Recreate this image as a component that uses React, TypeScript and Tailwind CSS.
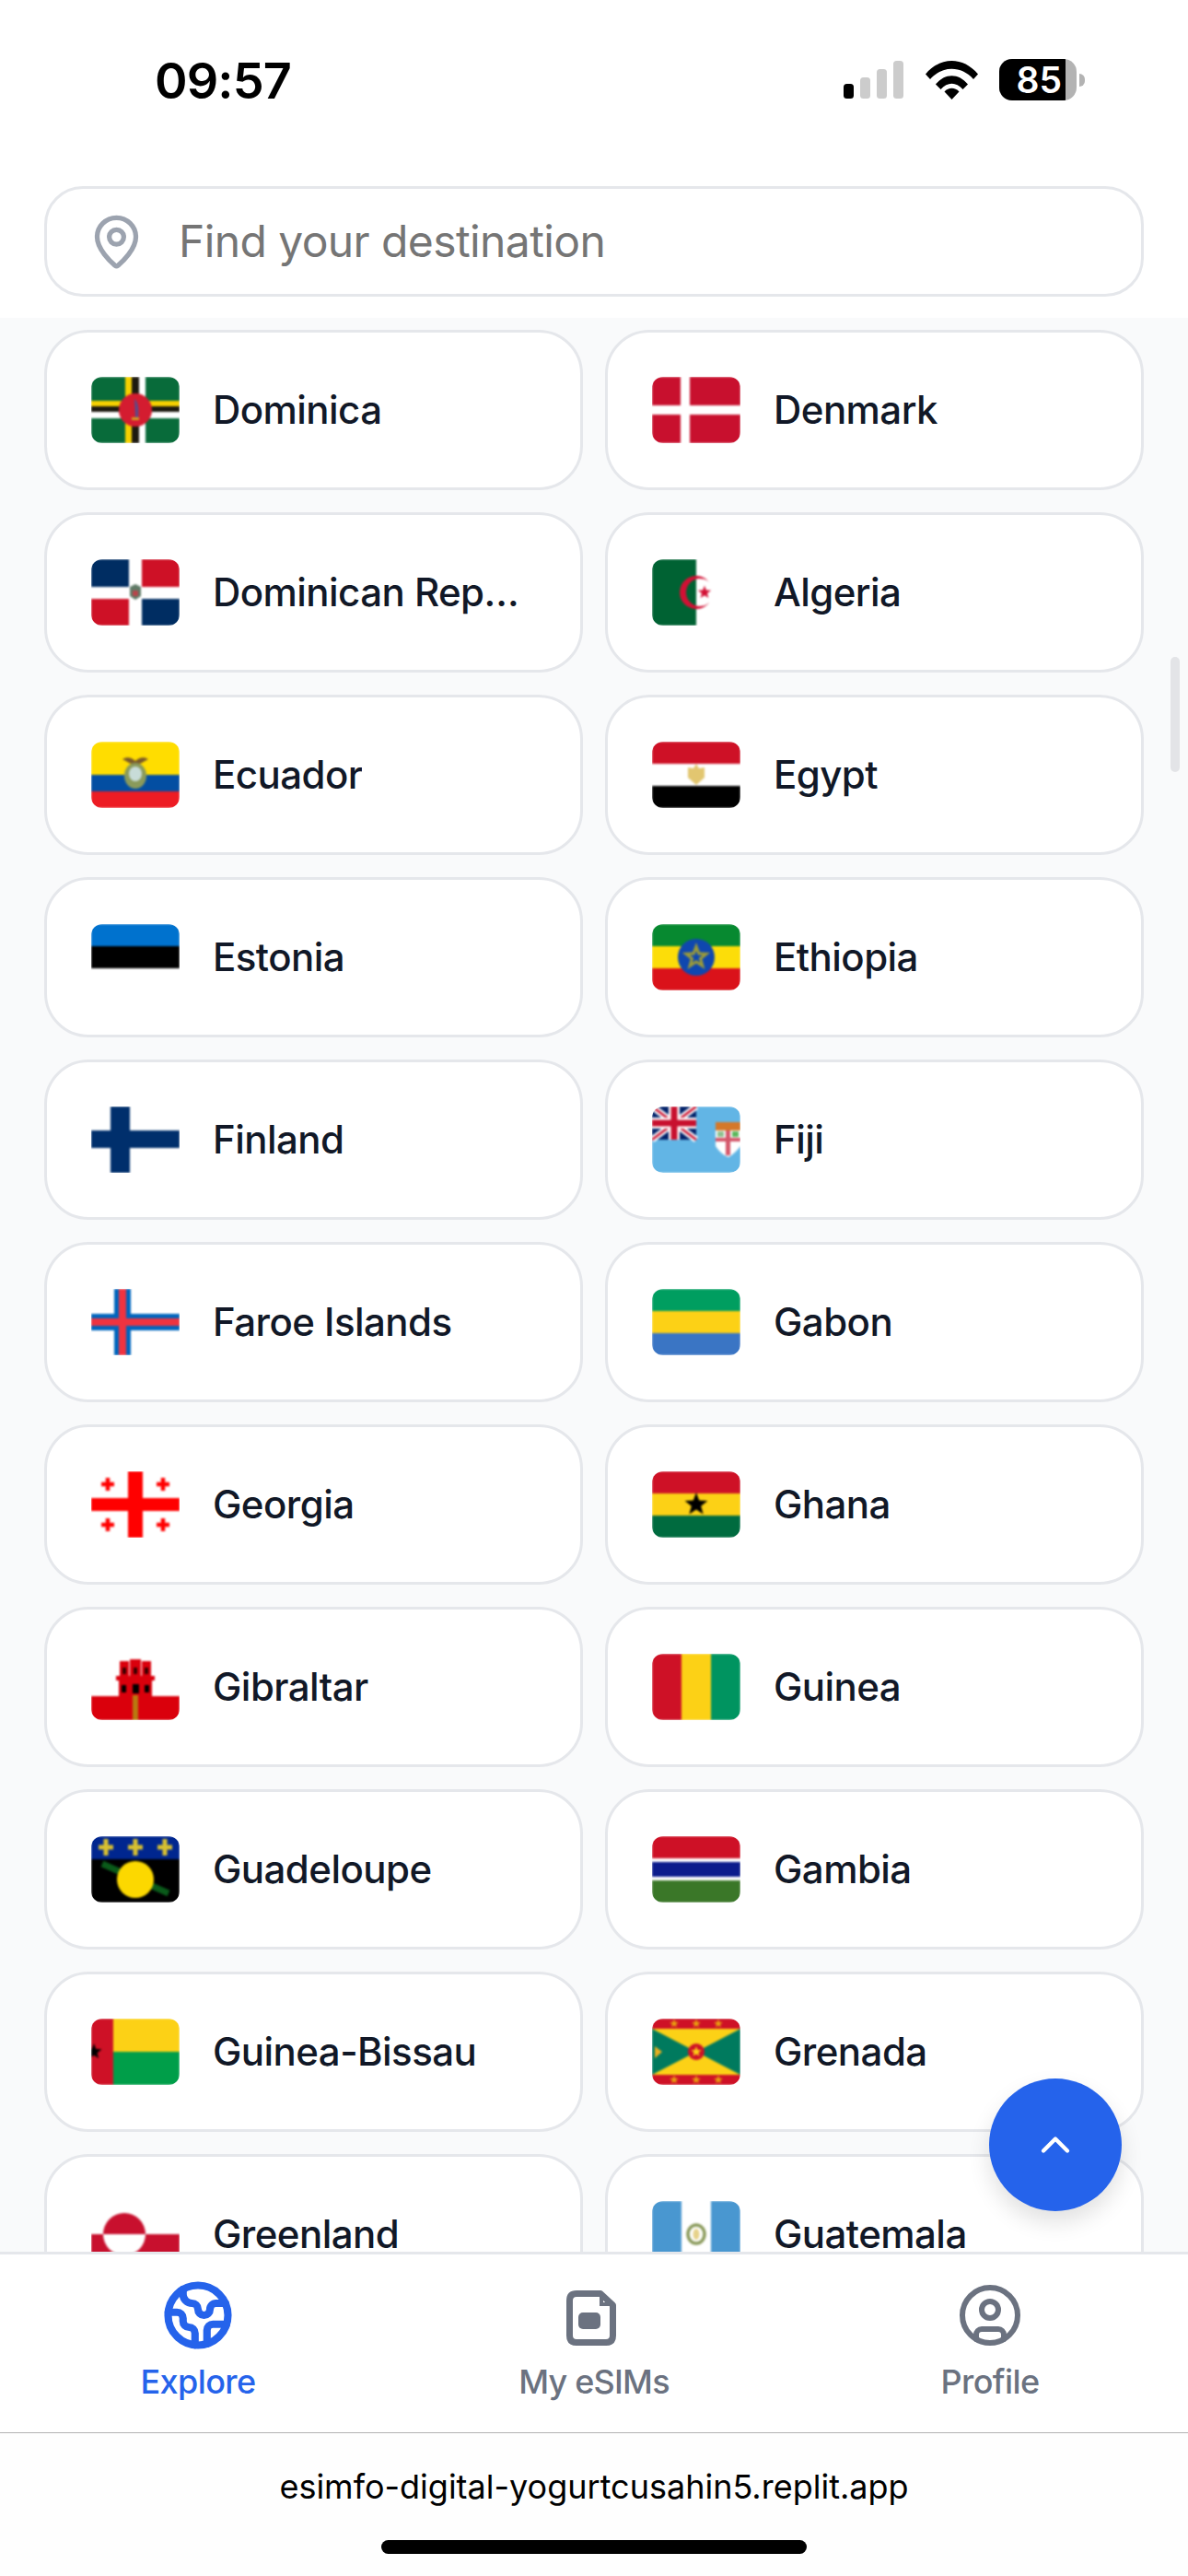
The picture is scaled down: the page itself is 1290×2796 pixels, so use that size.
import React from "react";
import { ChevronUp, Earth, MapPin, CircleUser } from "lucide-react";

const UnionJack = () => (
  <g>
    <rect width="48" height="36" fill="#012169" />
    <path d="M0 0L48 36M48 0L0 36" stroke="#fff" strokeWidth="7" />
    <path d="M0 0L48 36M48 0L0 36" stroke="#c8102e" strokeWidth="2.5" />
    <path d="M24 0V36M0 18H48" stroke="#fff" strokeWidth="12" />
    <path d="M24 0V36M0 18H48" stroke="#c8102e" strokeWidth="7" />
  </g>
);

const Star = ({ cx, cy, r, fill }: { cx: number; cy: number; r: number; fill: string }) => {
  const pts: string[] = [];
  for (let i = 0; i < 10; i++) {
    const a = -Math.PI / 2 + (i * Math.PI) / 5;
    const rad = i % 2 === 0 ? r : r * 0.42;
    pts.push(`${cx + rad * Math.cos(a)},${cy + rad * Math.sin(a)}`);
  }
  return <polygon points={pts.join(" ")} fill={fill} />;
};

const Stripes = ({ colors }: { colors: string[] }) => (
  <>
    {colors.map((c, i) => (
      <rect key={i} x="0" y={(i * 72) / colors.length} width="96" height={72 / colors.length} fill={c} />
    ))}
  </>
);

const Coat = ({ cx, cy }: { cx: number; cy: number }) => (
  <g>
    <ellipse cx={cx} cy={cy} rx="9" ry="10" fill="none" stroke="#8a9a5b" strokeWidth="3.5" />
    <ellipse cx={cx} cy={cy} rx="3.5" ry="6" fill="#e6d28a" />
  </g>
);

const flags: Record<string, React.ReactNode> = {
  Dominica: (
    <>
      <rect width="96" height="72" fill="#086b3a" />
      <rect x="37" width="7" height="72" fill="#f5d000" />
      <rect x="44" width="8" height="72" fill="#1d1a10" />
      <rect x="52" width="7" height="72" fill="#fff" />
      <rect y="26" width="96" height="6" fill="#f5d000" />
      <rect y="32" width="96" height="6" fill="#1d1a10" />
      <rect y="38" width="96" height="7" fill="#fff" />
      <circle cx="48" cy="36" r="18" fill="#d41c30" />
      <path d="M47 24c4 3 5 10 4 20h-3z" fill="#5a4a8a" />
      <rect x="44" y="44" width="8" height="3" fill="#d4a020" />
    </>
  ),
  Denmark: (
    <>
      <rect width="96" height="72" fill="#c8102e" />
      <rect x="31" width="10" height="72" fill="#fff" />
      <rect y="31" width="96" height="10" fill="#fff" />
    </>
  ),
  "Dominican Republic": (
    <>
      <rect width="96" height="72" fill="#fff" />
      <rect width="41" height="30" fill="#002d62" />
      <rect x="55" width="41" height="30" fill="#ce1126" />
      <rect y="43" width="41" height="29" fill="#ce1126" />
      <rect x="55" y="43" width="41" height="29" fill="#002d62" />
      <path d="M42 30l6-3 6 3v10l-6 4-6-4z" fill="#5f7a66" />
      <rect x="45" y="34" width="6" height="6" fill="#b8454a" />
    </>
  ),
  Algeria: (
    <>
      <rect width="96" height="72" fill="#fff" />
      <rect width="48" height="72" fill="#006233" />
      <path d="M62.4 25.2A18 18 0 1 0 62.4 46.8A15 15 0 1 1 62.4 25.2Z" fill="#d21034" />
      <Star cx={57} cy={36} r={7.5} fill="#d21034" />
    </>
  ),
  Ecuador: (
    <>
      <rect width="96" height="36" fill="#ffdd00" />
      <rect y="36" width="96" height="18" fill="#034ea2" />
      <rect y="54" width="96" height="18" fill="#ed1c24" />
      <path d="M34 19c5-3 10-2 14 2c4-4 9-5 14-2c-5 3-9 5-14 7c-5-2-9-4-14-7z" fill="#7a5a2a" />
      <ellipse cx="48" cy="37" rx="12" ry="14" fill="#8a9a5b" />
      <ellipse cx="48" cy="35" rx="7" ry="8" fill="#c8dcd8" />
    </>
  ),
  Egypt: (
    <>
      <Stripes colors={["#ce1126", "#fff", "#000"]} />
      <path d="M39 28l6 1 3-5 3 5 6-1v11l-9 8-9-8z" fill="#e2c670" />
    </>
  ),
  Estonia: <Stripes colors={["#0072ce", "#000", "#fff"]} />,
  Ethiopia: (
    <>
      <Stripes colors={["#078930", "#fcdd09", "#da121a"]} />
      <circle cx="48" cy="36" r="20" fill="#0f47af" />
      <Star cx={48} cy={36} r={16} fill="#9a9a3a" />
      <Star cx={48} cy={36} r={7} fill="#0f47af" />
    </>
  ),
  Finland: (
    <>
      <rect width="96" height="72" fill="#fff" />
      <rect x="21" width="21" height="72" fill="#002f6c" />
      <rect y="26" width="96" height="19" fill="#002f6c" />
    </>
  ),
  Fiji: (
    <>
      <rect width="96" height="72" fill="#62b5e5" />
      <UnionJack />
      <path d="M69 17h27v26q-6 8-13 12q-8-3-14-12z" fill="#fff" />
      <rect x="69" y="17" width="27" height="9" fill="#d4782a" />
      <rect x="80" y="26" width="5" height="27" fill="#d4566a" />
      <rect x="69" y="34" width="27" height="4" fill="#d4566a" />
      <rect x="71" y="27" width="7" height="6" fill="#8fc08f" />
      <rect x="87" y="27" width="7" height="6" fill="#5cb85c" />
    </>
  ),
  "Faroe Islands": (
    <>
      <rect width="96" height="72" fill="#fff" />
      <rect x="25" width="18" height="72" fill="#0065bd" />
      <rect y="27" width="96" height="18" fill="#0065bd" />
      <rect x="30" width="8" height="72" fill="#ef3340" />
      <rect y="32" width="96" height="8" fill="#ef3340" />
    </>
  ),
  Gabon: <Stripes colors={["#009e60", "#fcd116", "#3a75c4"]} />,
  Georgia: (
    <>
      <rect width="96" height="72" fill="#fff" />
      <rect x="40" width="16" height="72" fill="#f00" />
      <rect y="29" width="96" height="14" fill="#f00" />
      {[
        [18, 14],
        [78, 14],
        [18, 58],
        [78, 58],
      ].map(([x, y], i) => (
        <path key={i} d={`M${x} ${y - 7}V${y + 7}M${x - 7} ${y}H${x + 7}`} stroke="#f00" strokeWidth="4.5" />
      ))}
    </>
  ),
  Ghana: (
    <>
      <Stripes colors={["#ce1126", "#fcd116", "#006b3f"]} />
      <Star cx={48} cy={36} r={13} fill="#000" />
    </>
  ),
  Gibraltar: (
    <>
      <rect width="96" height="72" fill="#fff" />
      <rect y="46" width="96" height="26" fill="#da000c" />
      <rect x="31" y="8" width="10" height="20" fill="#da000c" />
      <rect x="42" y="6" width="12" height="22" fill="#da000c" />
      <rect x="55" y="8" width="10" height="20" fill="#da000c" />
      <rect x="27" y="24" width="42" height="5" fill="#da000c" />
      <rect x="30" y="28" width="36" height="20" fill="#da000c" />
      <rect x="34" y="15" width="4" height="7" fill="#300" />
      <rect x="46" y="15" width="4" height="7" fill="#300" />
      <rect x="58" y="15" width="4" height="7" fill="#300" />
      <rect x="33" y="34" width="5" height="8" fill="#000" />
      <rect x="45" y="33" width="7" height="10" fill="#000" />
      <rect x="58" y="34" width="5" height="8" fill="#000" />
      <rect x="45" y="45" width="6" height="27" fill="#b87a10" />
    </>
  ),
  Guinea: (
    <>
      <rect width="32" height="72" fill="#ce1126" />
      <rect x="32" width="32" height="72" fill="#fcd116" />
      <rect x="64" width="32" height="72" fill="#009460" />
    </>
  ),
  Guadeloupe: (
    <>
      <rect width="96" height="72" fill="#000" />
      <rect width="96" height="25" fill="#00268f" />
      <path d="M12 30L84 62" stroke="#0a5a1a" strokeWidth="7" />
      <circle cx="48" cy="47" r="20" fill="#fcd800" />
      {[16, 48, 80].map((x) => (
        <path key={x} d={`M${x} 3V21M${x - 8} 12H${x + 8}`} stroke="#d8c030" strokeWidth="5" />
      ))}
    </>
  ),
  Gambia: (
    <>
      <rect width="96" height="24" fill="#ce1126" />
      <rect y="24" width="96" height="24" fill="#fff" />
      <rect y="28" width="96" height="16" fill="#0c1c8c" />
      <rect y="48" width="96" height="24" fill="#3a7728" />
    </>
  ),
  "Guinea-Bissau": (
    <>
      <rect x="24" width="72" height="36" fill="#fcd116" />
      <rect x="24" y="36" width="72" height="36" fill="#009e49" />
      <rect width="24" height="72" fill="#ce1126" />
      <Star cx={3} cy={36} r={9} fill="#000" />
    </>
  ),
  Grenada: (
    <>
      <rect width="96" height="72" fill="#ce1126" />
      <rect y="11" width="96" height="50" fill="#007a5e" />
      <path d="M0 11H96L48 36zM0 61H96L48 36z" fill="#fcd116" />
      <circle cx="48" cy="36" r="9" fill="#ce1126" />
      <Star cx={48} cy={36} r={6} fill="#fcd116" />
      {[24, 48, 72].map((x) => (
        <React.Fragment key={x}>
          <Star cx={x} cy={5.5} r={5} fill="#e8a010" />
          <Star cx={x} cy={66.5} r={5} fill="#e8a010" />
        </React.Fragment>
      ))}
      <path d="M3 30l8 6-8 7z" fill="#e8b020" />
    </>
  ),
  Greenland: (
    <>
      <rect width="96" height="36" fill="#fff" />
      <rect y="36" width="96" height="36" fill="#c8102e" />
      <path d="M13 36a23 23 0 0 1 46 0z" fill="#c8102e" />
      <path d="M13 36a23 23 0 0 0 46 0z" fill="#fff" />
    </>
  ),
  Guatemala: (
    <>
      <rect width="96" height="72" fill="#4997d0" />
      <rect x="32" width="32" height="72" fill="#fff" />
      <Coat cx={48} cy={36} />
    </>
  ),
};

const rows: [string, string][] = [
  ["Dominica", "Denmark"],
  ["Dominican Republic", "Algeria"],
  ["Ecuador", "Egypt"],
  ["Estonia", "Ethiopia"],
  ["Finland", "Fiji"],
  ["Faroe Islands", "Gabon"],
  ["Georgia", "Ghana"],
  ["Gibraltar", "Guinea"],
  ["Guadeloupe", "Gambia"],
  ["Guinea-Bissau", "Grenada"],
  ["Greenland", "Guatemala"],
];

const Card = ({ name }: { name: string }) => (
  <div className="flex h-[174px] min-w-0 items-center gap-[36px] rounded-[48px] border-[3px] border-[#e5e7eb] bg-white px-[48px]">
    <div className="h-[72px] w-[96px] shrink-0 overflow-hidden rounded-[12px]">
      <svg viewBox="0 0 96 72" width="96" height="72" className="block blur-[0.9px]">
        {flags[name]}
      </svg>
    </div>
    <span className="truncate text-[42px] font-medium leading-[60px] tracking-[-0.55px] text-[#111827]">{name}</span>
  </div>
);

const SimIcon = () => (
  <svg width="54" height="60" viewBox="0 0 54 60" className="ml-[-6px] mt-[6px]">
    <path
      d="M11 3.5H37L50.5 16V49Q50.5 56.5 43 56.5H11Q3.5 56.5 3.5 49V11Q3.5 3.5 11 3.5Z"
      fill="none"
      stroke="#6b7280"
      strokeWidth="7"
      strokeLinejoin="round"
    />
    <path d="M38 4V15H50" fill="none" stroke="#6b7280" strokeWidth="4" />
    <rect x="13" y="24" width="24" height="18" rx="5" fill="#6b7280" />
  </svg>
);

export default function App() {
  return (
    <div
      className="relative flex h-[2796px] w-[1290px] flex-col overflow-hidden bg-white"
      style={{ fontFamily: "Inter, 'Liberation Sans', sans-serif" }}
    >
      {/* Header */}
      <header className="z-10 flex h-[345px] shrink-0 flex-col bg-white">
        <div className="flex h-[202px] shrink-0 items-start justify-between pl-[168px] pr-[112px] pt-[57px]">
          <span className="text-[54px] font-semibold leading-[62px] tracking-[-0.9px] text-black">09:57</span>
          <div className="flex items-center pt-[7px]">
            <svg width="66" height="42" viewBox="0 0 66 42" className="mr-[23px] mt-[1px]">
              <rect x="0" y="25" width="11" height="16" rx="3.5" fill="#000" />
              <rect x="18" y="18" width="11" height="23" rx="3.5" fill="#ccc" />
              <rect x="36" y="9" width="11" height="32" rx="3.5" fill="#ccc" />
              <rect x="54" y="0" width="11" height="41" rx="3.5" fill="#ccc" />
            </svg>
            <svg width="57" height="42" viewBox="0 0 57 42" className="mr-[23px] mt-[1px]">
              <path d="M0 14.5C16 -4.8 41 -4.8 57 14.5L52 20C39 5 18 5 5 20Z" fill="#000" />
              <path d="M11 25.5C21 13 36 13 46 25.5L40.5 31C33 22.5 24 22.5 16.5 31Z" fill="#000" />
              <path d="M20.5 33.5C25 28.5 32 28.5 36.5 33.5L28.5 42Z" fill="#000" />
            </svg>
            <div className="flex h-[45px] w-[84px] overflow-hidden rounded-[14px] bg-[#b3b3b3]">
              <div className="flex w-[72px] items-center justify-end bg-black pr-[4px] text-[39px] font-semibold leading-[45px] text-white">
                85
              </div>
            </div>
            <div className="ml-[3px] h-[14px] w-[6px] rounded-r-full bg-[#b3b3b3]" />
          </div>
        </div>
        <div className="mx-[48px] flex h-[120px] shrink-0 items-center rounded-[42px] border-[3px] border-[#e5e7eb] bg-white pl-[44px]">
          <MapPin size={63} strokeWidth={2} className="shrink-0 text-[#9ca3af]" />
          <input
            readOnly
            placeholder="Find your destination"
            className="ml-[36px] min-w-0 flex-1 bg-transparent text-[48px] leading-[60px] tracking-[-0.6px] outline-none placeholder:text-[#757575]"
          />
        </div>
      </header>

      {/* List */}
      <main className="min-h-0 flex-1 overflow-hidden bg-[#f9fafb] px-[48px] pt-[13px]">
        <div className="grid grid-cols-2 gap-[24px]">
          {rows.flat().map((n) => (
            <Card key={n} name={n} />
          ))}
        </div>
      </main>

      {/* Nav */}
      <nav className="z-10 flex h-[196px] shrink-0 border-t-[3px] border-[#e5e7eb] bg-white pt-[26px]">
        <div className="flex flex-1 flex-col items-center">
          <div className="flex h-[80px] items-center justify-center">
            <Earth size={78} strokeWidth={2.5} className="text-[#2563eb]" />
          </div>
          <span className="mt-[8px] text-[36px] font-medium leading-[48px] tracking-[-0.6px] text-[#2563eb]">Explore</span>
        </div>
        <div className="flex flex-1 flex-col items-center">
          <div className="flex h-[80px] items-center justify-center">
            <SimIcon />
          </div>
          <span className="mt-[8px] text-[36px] font-medium leading-[48px] tracking-[-0.8px] text-[#6b7280]">My eSIMs</span>
        </div>
        <div className="flex flex-1 flex-col items-center">
          <div className="flex h-[80px] items-center justify-center">
            <CircleUser size={72} strokeWidth={2} className="text-[#6b7280]" />
          </div>
          <span className="mt-[8px] text-[36px] font-medium leading-[48px] tracking-[-0.6px] text-[#6b7280]">Profile</span>
        </div>
      </nav>

      {/* Browser bar */}
      <footer className="flex h-[156px] shrink-0 flex-col items-center border-t-[1.5px] border-[#b2b2b2] bg-[#fefefe]">
        <span className="mt-[34px] text-[36px] leading-[48px] text-black">esimfo-digital-yogurtcusahin5.replit.app</span>
        <div className="mt-[34px] h-[15px] w-[462px] rounded-full bg-black" />
      </footer>

      {/* Scrollbar */}
      <div className="absolute left-[1271px] top-[713px] h-[125px] w-[10px] rounded-full bg-[#e3e4e7]" />

      {/* FAB */}
      <button className="absolute left-[1074px] top-[2256px] z-20 flex h-[144px] w-[144px] items-center justify-center rounded-full bg-[#2563eb] shadow-[0_12px_24px_rgba(0,0,0,0.12)]">
        <ChevronUp size={52} strokeWidth={2} className="text-white" />
      </button>
    </div>
  );
}
